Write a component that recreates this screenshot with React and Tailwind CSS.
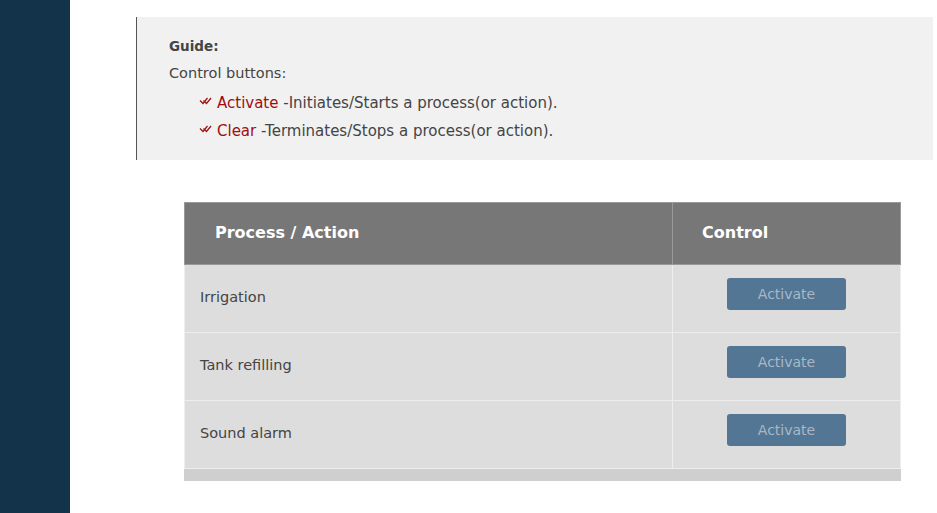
import React from 'react';

const rows = ['Irrigation', 'Tank refilling', 'Sound alarm'];

function DoubleCheck() {
  return (
    <svg width="14" height="9" viewBox="0 0 14 9" className="inline-block mr-[4px] -translate-y-[2px]">
      <path d="M1 3.5 L4 6.5 L8.5 1" fill="none" stroke="#a10d0d" strokeWidth="1.2" />
      <path d="M4.5 3.5 L7.5 6.5 L12 1" fill="none" stroke="#a10d0d" strokeWidth="1.2" />
    </svg>
  );
}

export default function App() {
  return (
    <div className="flex min-h-[513px] bg-white" style={{ fontFamily: '"DejaVu Sans", "Noto Sans", sans-serif' }}>
      <aside className="w-[70px] shrink-0 bg-[#12334a]" />
      <main className="flex-1 pt-[17px] pr-[4px]">
        <div className="ml-[66px] h-[143px] border-l border-[#555] bg-[#f1f1f1] pl-[32px] pt-[20px] text-[#444]">
          <p className="text-[13.5px] font-bold leading-[18px]">Guide:</p>
          <p className="mt-[8px] text-[14.5px] leading-[20px]">Control buttons:</p>
          <ul className="mt-[10px] pl-[30px] text-[15px] leading-[20px]">
            <li>
              <DoubleCheck />
              <span className="text-[#a10d0d]">Activate</span> -Initiates/Starts a process(or action).
            </li>
            <li className="mt-[8px]">
              <DoubleCheck />
              <span className="text-[#a10d0d]">Clear</span> -Terminates/Stops a process(or action).
            </li>
          </ul>
        </div>

        <div className="ml-[114px] mt-[42px] w-[717px]">
          <table className="w-full border-collapse">
            <thead>
              <tr className="h-[61.5px] bg-[#777] text-left text-[16px] font-bold text-white">
                <th className="w-[488px] border border-[#999] pl-[30px]">Process / Action</th>
                <th className="border border-[#999] pl-[29px]">Control</th>
              </tr>
            </thead>
            <tbody>
              {rows.map((name) => (
                <tr key={name} className="h-[68px] bg-[#dddddd] text-[14.5px] text-[#444]">
                  <td className="border border-[#eeeeee] pl-[15px]">{name}</td>
                  <td className="border border-[#eeeeee] pb-[8px] text-center">
                    <button className="h-[32px] w-[119px] rounded-[3px] bg-[#527694] text-[14px] text-[#a9b8c6]">
                      Activate
                    </button>
                  </td>
                </tr>
              ))}
            </tbody>
          </table>
          <div className="h-[12px] bg-[#cfcfcf]" />
        </div>
      </main>
    </div>
  );
}
